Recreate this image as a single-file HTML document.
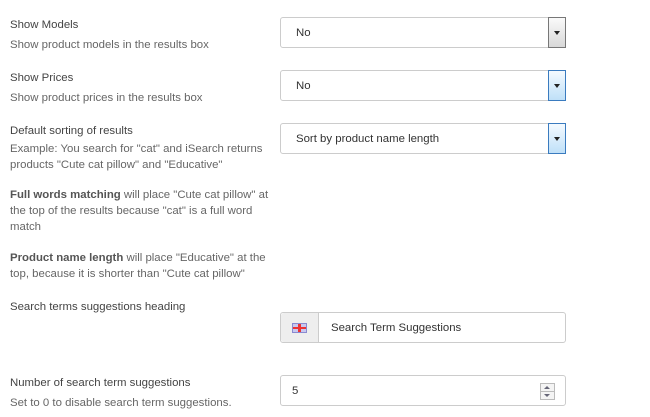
<!DOCTYPE html><html><head><style>
body{margin:0;width:650px;height:417px;background:#fff;font-family:"Liberation Sans",sans-serif;font-size:11.4px;color:#444;position:relative;overflow:hidden}
.t{position:absolute;left:10px;white-space:nowrap;line-height:16px}
.h{color:#666}
b{color:#555}
.sel{position:absolute;left:280px;width:284px;height:29px;border:1px solid #ccc;border-radius:3px;background:#fff}
.sel span{position:absolute;left:15px;top:9px;color:#333}
.arr{position:absolute;right:-1px;top:-1px;width:16px;height:29px;border:1px solid #3a7bbf;background:linear-gradient(#f4faff,#bfe0f8)}
.arr.g{border-color:#777;background:linear-gradient(#fafafa,#d8d8d8)}
.arr:after{content:"";position:absolute;left:5px;top:13px;border-left:3px solid transparent;border-right:3px solid transparent;border-top:4px solid #222}
</style></head><body>
<div class="t" style="top:17px">Show Models</div>
<div class="t h" style="top:37px">Show product models in the results box</div>
<div class="t" style="top:70px">Show Prices</div>
<div class="t h" style="top:90px">Show product prices in the results box</div>
<div class="t" style="top:123px">Default sorting of results</div>
<div class="t h" style="top:141px">Example: You search for "cat" and iSearch returns<br>products "Cute cat pillow" and "Educative"</div>
<div class="t h" style="top:187px"><b>Full words matching</b> will place "Cute cat pillow" at<br>the top of the results because "cat" is a full word<br>match</div>
<div class="t h" style="top:250px"><b>Product name length</b> will place "Educative" at the<br>top, because it is shorter than "Cute cat pillow"</div>
<div class="t" style="top:299px">Search terms suggestions heading</div>
<div class="t" style="top:375px">Number of search term suggestions</div>
<div class="t h" style="top:395px">Set to 0 to disable search term suggestions.</div>

<div class="sel" style="top:17px"><span>No</span><div class="arr g"></div></div>
<div class="sel" style="top:70px"><span>No</span><div class="arr"></div></div>
<div class="sel" style="top:123px"><span>Sort by product name length</span><div class="arr"></div></div>

<div class="sel" style="top:312px;height:29px">
<div style="position:absolute;left:0;top:0;width:37px;height:29px;background:#eee;border-right:1px solid #ccc;border-radius:3px 0 0 3px">
<div style="position:absolute;left:12px;top:11px;width:13px;height:8px;background:#c8c8f0;outline:1px solid #8a8ad0"><div style="position:absolute;left:5px;top:0;width:3px;height:8px;background:#e33"></div><div style="position:absolute;left:0;top:3px;width:13px;height:2px;background:#e33"></div></div></div>
<span style="left:50px">Search Term Suggestions</span></div>

<div class="sel" style="top:375px"><span style="left:11px">5</span>
<div style="position:absolute;left:259px;top:7px;width:13px;height:15px;border:1px solid #bbb;background:#f4f4f4">
<div style="position:absolute;left:3px;top:2px;border-left:3px solid transparent;border-right:3px solid transparent;border-bottom:3px solid #667"></div>
<div style="position:absolute;left:0;top:7px;width:13px;height:1px;background:#bbb"></div>
<div style="position:absolute;left:3px;top:10px;border-left:3px solid transparent;border-right:3px solid transparent;border-top:3px solid #667"></div></div></div>
</body></html>
